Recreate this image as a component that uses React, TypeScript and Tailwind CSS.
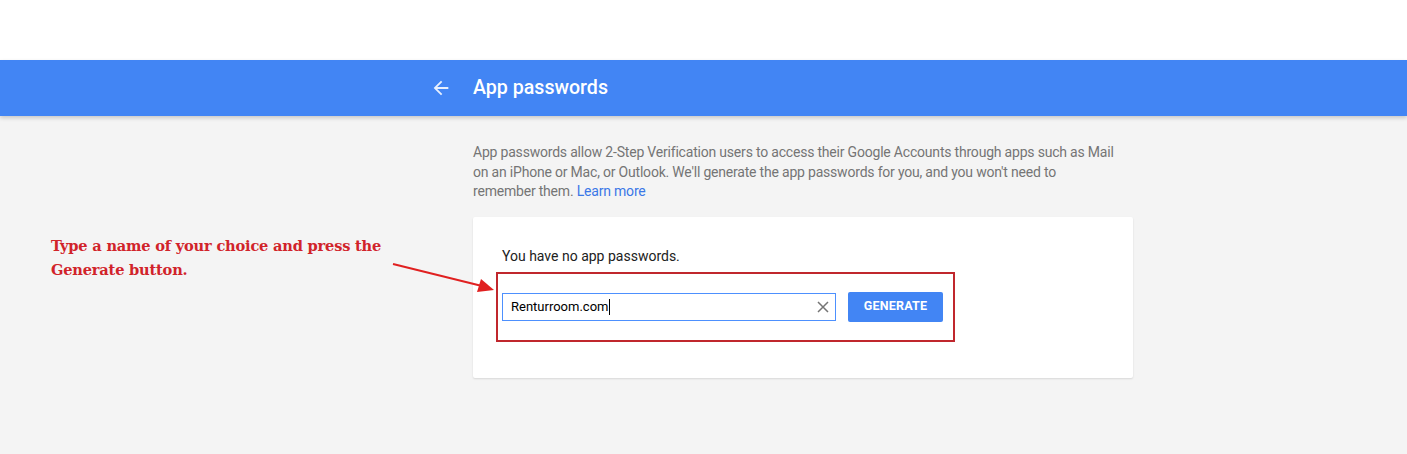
import React from "react";

export default function App() {
  return (
    <div className="relative w-[1407px] h-[454px] overflow-hidden bg-[#f4f4f4] font-['Roboto',sans-serif]">
      <div className="h-[60px] bg-white" />
      <header className="relative z-10 h-[56px] bg-[#4285f4] shadow-[0_2px_4px_rgba(0,0,0,0.18)] flex items-center">
        <div className="ml-[430px] flex items-center">
          <svg width="22" height="22" viewBox="0 0 24 24" className="text-[#e8f0fe]">
            <path d="M20 11H7.83l5.59-5.59L12 4l-8 8 8 8 1.41-1.41L7.83 13H20v-2z" fill="currentColor" />
          </svg>
          <h1 className="ml-[21px] text-[19.6px] font-medium text-white leading-none">App passwords</h1>
        </div>
      </header>

      <div className="flex">
        <div className="w-[473px] shrink-0 pt-[118px] pl-[51px]">
          <p className="font-['DejaVu_Serif',serif] font-bold text-[14.6px] leading-[24px] text-[#d1232a] tracking-[-0.2px]">
            Type a name of your choice and press the
            <br />
            Generate button.
          </p>
        </div>
        <main className="w-[660px] pt-[27px]">
          <p className="text-[14px] leading-[19.5px] text-[#757575] tracking-[-0.2px]">
            App passwords allow 2-Step Verification users to access their Google Accounts through apps such as Mail
            <br />
            on an iPhone or Mac, or Outlook. We'll generate the app passwords for you, and you won't need to
            <br />
            remember them. <span className="text-[#3b78e7]">Learn more</span>
          </p>
          <div className="mt-[15px] h-[161px] bg-white rounded-[2px] shadow-[0_1px_2px_rgba(0,0,0,0.12)] pt-[29px] pl-[29px]">
            <p className="text-[14px] leading-[20px] text-[#212121]">You have no app passwords.</p>
            <div className="relative mt-[26px] flex items-center">
              <div className="absolute left-[-6px] top-[-20px] w-[459px] h-[70px] border-2 border-[#c0272d]" />
              <div className="w-[334px] h-[28px] border border-[#4d90fe] flex items-center pl-[8px] pr-[5px]">
                <span className="text-[13px] text-black">Renturroom.com</span>
                <span className="w-px h-[16px] bg-black ml-[1px]" />
                <span className="ml-auto">
                  <svg width="14" height="14" viewBox="0 0 14 14">
                    <path d="M2 2 L12 12 M12 2 L2 12" stroke="#757575" strokeWidth="1.5" />
                  </svg>
                </span>
              </div>
              <button className="ml-[12px] w-[95px] h-[30px] bg-[#4285f4] rounded-[2px] text-white text-[12.5px] font-bold tracking-[0.2px]">
                GENERATE
              </button>
            </div>
          </div>
        </main>
      </div>

      <svg className="absolute left-0 top-0" width="1407" height="454" style={{ pointerEvents: "none" }}>
        <line x1="393" y1="264" x2="482" y2="286" stroke="#e02020" strokeWidth="2" />
        <polygon points="494,290 477,292 481,279" fill="#e02020" />
      </svg>
    </div>
  );
}
